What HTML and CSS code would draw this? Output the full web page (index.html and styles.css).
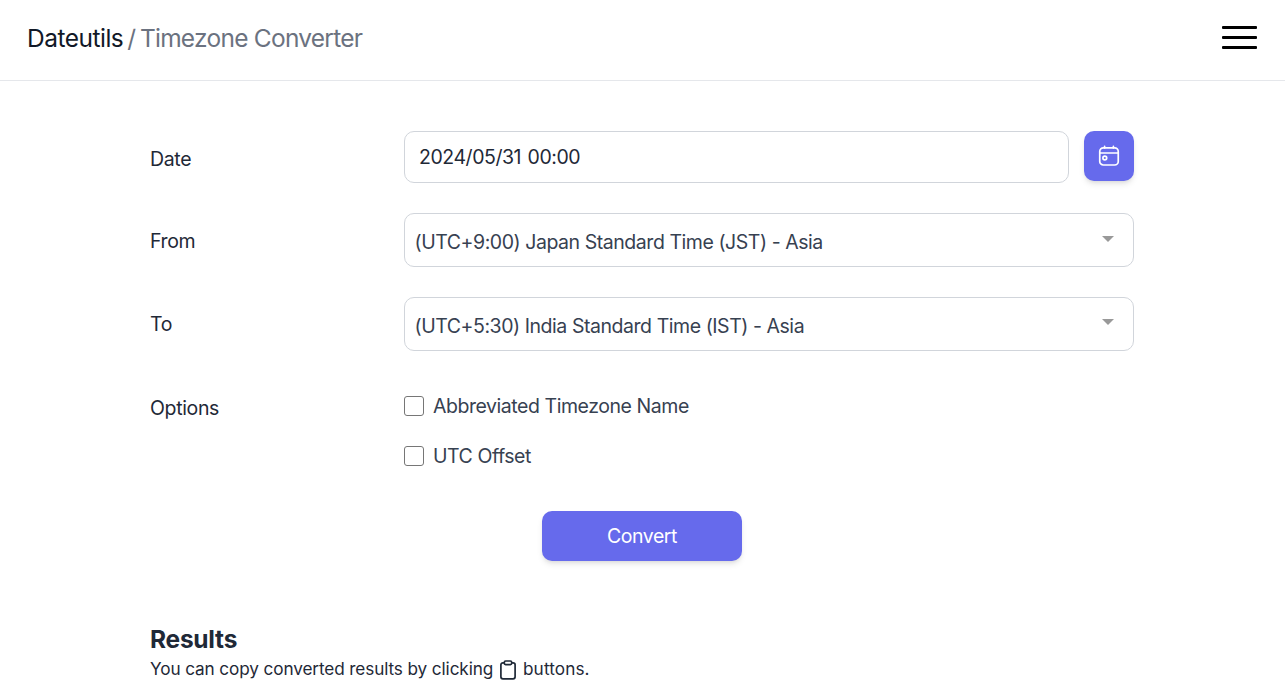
FILE: index.html
```html
<!DOCTYPE html>
<html lang="en">
<head>
<meta charset="utf-8">
<title>Dateutils / Timezone Converter</title>
<link rel="stylesheet" href="styles.css">
</head>
<body>
<header class="header">
  <div class="brand"><span class="brand-name">Dateutils</span><span class="slash">/</span><span class="page-name">Timezone Converter</span></div>
  <button class="menu" aria-label="Menu"><span></span><span></span><span></span></button>
</header>
<main class="main">
  <div class="row date-row">
    <label class="label">Date</label>
    <div class="field date-field">
      <div class="input">2024/05/31 00:00</div>
      <button class="cal" aria-label="Open calendar">
        <svg width="22" height="22" viewBox="0 0 22 22" fill="none" stroke="currentColor" stroke-width="1.7" stroke-linecap="round"><rect x="1.75" y="2.9" width="18.5" height="17.1" rx="3.6"/><path d="M2 8h18M6.6 1.4v1.5M15.4 1.4v1.5"/><circle cx="6.8" cy="13" r="1.9"/></svg>
      </button>
    </div>
  </div>
  <div class="row from-row">
    <label class="label">From</label>
    <div class="field select"><span>(UTC+9:00) Japan Standard Time (JST) - Asia</span><i class="arrow"></i></div>
  </div>
  <div class="row to-row">
    <label class="label">To</label>
    <div class="field select"><span>(UTC+5:30) India Standard Time (IST) - Asia</span><i class="arrow"></i></div>
  </div>
  <div class="row options-row">
    <div class="label">Options</div>
    <div class="field options">
      <label class="option"><span class="box"></span><span>Abbreviated Timezone Name</span></label>
      <label class="option"><span class="box"></span><span>UTC Offset</span></label>
    </div>
  </div>
  <button class="convert">Convert</button>
  <h2 class="results">Results</h2>
  <p class="hint"><span class="hint-text">You can copy converted results by clicking</span>
    <svg class="clip" width="18" height="20" viewBox="0 0 18 20" fill="none" stroke="currentColor" stroke-width="1.7" stroke-linejoin="round"><rect x="1.9" y="2.8" width="14.2" height="16" rx="2"/><rect x="5.3" y="1" width="7.4" height="3.6" rx="1.3" fill="#fff"/></svg>
    <span class="hint-end">buttons.</span></p>
</main>
</body>
</html>
```
FILE: styles.css
```css
* { box-sizing: border-box; }
body { margin: 0; height: 700px; overflow: hidden; background: #fff; color: #1f2937; font: 19.5px/30px Inter, sans-serif; letter-spacing: -0.45px; }
button { border: 0; padding: 0; font: inherit; letter-spacing: inherit; }
.header { height: 81px; border-bottom: 1px solid #e5e7eb; display: flex; justify-content: space-between; padding: 20px 28px 0 27px; }
.brand { display: flex; font-size: 24.5px; line-height: 36px; letter-spacing: -0.75px; color: #6b7280; }
.brand-name { color: #111827; letter-spacing: -0.5px; }
.slash { margin: 0 4.5px 0 4px; }
.menu { width: 35px; height: 23px; margin-top: 6px; background: none; display: flex; flex-direction: column; justify-content: space-between; }
.menu span { width: 35px; height: 3px; border-radius: 1px; background: #000; }
.main { width: 984px; margin: 50px 0 0 150px; }
.row { display: flex; align-items: center; }
.label { width: 254px; letter-spacing: -0.35px; }
.field { width: 730px; }
.date-row { height: 52px; }
.date-row .label { padding-top: 4px; }
.from-row .label { padding-top: 2px; }
.to-row .label { padding-bottom: 1px; }
.date-field { display: flex; gap: 15px; }
.input { width: 665px; height: 52px; border: 1px solid #d1d5db; border-radius: 10px; padding: 10px 14px; letter-spacing: -0.45px; word-spacing: 1.5px; }
.cal { width: 50px; height: 50px; border-radius: 10px; background: #666aec; color: #fff; display: grid; place-items: center; box-shadow: 0 4px 6px -1px #0000001a, 0 2px 4px -2px #0000001a; }
.from-row, .to-row { margin-top: 30px; height: 54px; }
.select { height: 54px; border: 1px solid #d1d5db; border-radius: 10px; padding: 4px 19px 0 9.5px; display: flex; align-items: center; justify-content: space-between; color: #374151; }
.arrow { border: 6px solid transparent; border-top-color: #999; border-bottom: 0; margin-top: -7px; }
.to-row .arrow { margin-top: -9px; }
.options-row { margin-top: 40px; align-items: flex-start; }
.options-row .label { padding-top: 2px; }
.options { display: flex; flex-direction: column; gap: 20px; color: #374151; }
.option { display: flex; align-items: center; gap: 9px; }
.box { width: 20px; height: 20px; border: 1px solid #767676; border-radius: 3px; }
.convert { display: block; width: 200px; height: 50px; margin: 40px 0 0 392px; border-radius: 10px; background: #666aec; color: #fff; box-shadow: 0 4px 6px -1px #0000001a, 0 2px 4px -2px #0000001a; }
.results { font-size: 24.5px; line-height: 36px; margin: 60px 0 0; font-weight: 700; letter-spacing: -0.25px; }
.hint { display: flex; margin: 0; font-size: 17.2px; line-height: 24px; letter-spacing: -0.12px; }
.hint-text { width: 343px; white-space: nowrap; }
.hint-end { letter-spacing: 0.1px; }
.clip { margin: 3px 6px 0; }
```
